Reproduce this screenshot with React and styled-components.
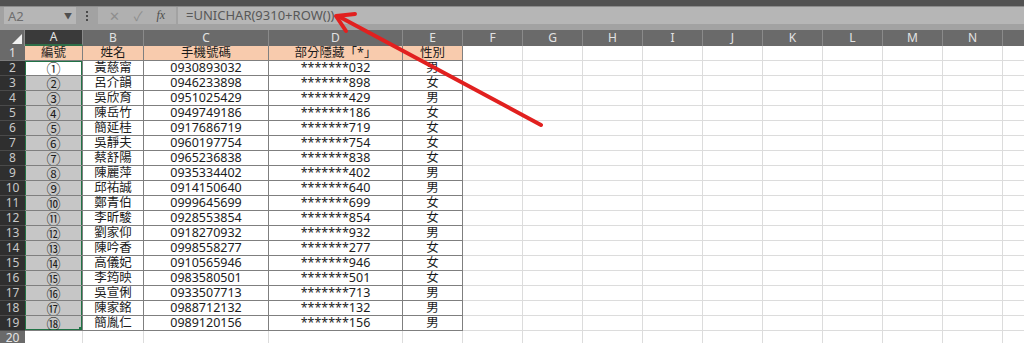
import React from "react"
import styled, { createGlobalStyle } from "styled-components"

const GlobalStyle = createGlobalStyle`
  * { box-sizing: border-box; }
  body {
    margin: 0;
    background: #ffffff;
    overflow: hidden;
    font-family: "Noto Sans", "Noto Sans CJK TC", sans-serif;
  }
`

const rows = [
  ["黃慈甯", "0930893032", "男"],
  ["呂介韻", "0946233898", "女"],
  ["吳欣育", "0951025429", "男"],
  ["陳岳竹", "0949749186", "女"],
  ["簡延桂", "0917686719", "女"],
  ["吳靜夫", "0960197754", "女"],
  ["蔡舒陽", "0965236838", "女"],
  ["陳麗萍", "0935334402", "男"],
  ["邱祐誠", "0914150640", "男"],
  ["鄭青伯", "0999645699", "女"],
  ["李昕駿", "0928553854", "女"],
  ["劉家仰", "0918270932", "男"],
  ["陳吟香", "0998558277", "女"],
  ["高儀妃", "0910565946", "女"],
  ["李筠映", "0983580501", "女"],
  ["吳宣俐", "0933507713", "男"],
  ["陳家銘", "0988712132", "男"],
  ["簡胤仁", "0989120156", "男"],
]

const titles = ["編號", "姓名", "手機號碼", "部分隱藏「*」", "性別"]
const letters = ["A", "B", "C", "D", "E", "F", "G", "H", "I", "J", "K", "L", "M", "N", "O"]

const Page = styled.div`
  position: relative;
  width: 1024px;
  height: 343px;
  overflow: hidden;
`

const TopStrip = styled.div`
  height: 7px;
  background: #525252;
  border-bottom: 1px solid #8c8c8c;
`

const Toolbar = styled.div`
  display: flex;
  align-items: flex-start;
  height: 23px;
  padding-left: 4px;
  background: #a2a2a2;
`

const NameBox = styled.div`
  display: flex;
  align-items: center;
  justify-content: space-between;
  width: 72px;
  height: 17px;
  padding: 0 4px 0 4px;
  background: #b6b6b6;
  color: #6e6e6e;
  font-size: 13px;

  span:last-child {
    font-size: 8px;
    color: #505050;
  }
`

const Grip = styled.div`
  display: flex;
  flex-direction: column;
  align-items: center;
  justify-content: center;
  gap: 2px;
  width: 22px;
  height: 17px;

  i {
    width: 2px;
    height: 2px;
    background: #4a4a4a;
  }
`

const ButtonGroup = styled.div`
  display: flex;
  align-items: center;
  justify-content: space-around;
  width: 78px;
  height: 17px;
  margin-right: 2px;
  padding: 0 4px;
  background: #b0b0b0;
  color: #8e8e8e;
  font-size: 13px;
`

const Fx = styled.span`
  color: #4d4d4d;
  font-family: "Liberation Serif", serif;
  font-style: italic;
  font-size: 12px;
`

const FormulaBox = styled.div`
  flex: 1;
  height: 17px;
  padding-left: 8px;
  background: #b6b6b6;
  color: #585858;
  font-size: 13px;
  line-height: 17px;
`

const Sheet = styled.div`
  display: grid;
  grid-template-columns: 25px 58px 61px 125px 134px 60px repeat(10, 60px);
  grid-template-rows: 16px repeat(20, 15px);
  font-size: 12.5px;
  line-height: 1;
`

const Corner = styled.div`
  display: flex;
  align-items: flex-end;
  justify-content: flex-end;
  padding: 0 2px 2px 0;
  background: #6a6a6a;
  border-right: 1px solid #8a8a8a;
`

const ColHead = styled.div`
  display: flex;
  align-items: center;
  justify-content: center;
  background: ${p => (p.$active ? "#3a3a3a" : "#6a6a6a")};
  border-right: 1px solid #8a8a8a;
  border-bottom: ${p => (p.$active ? "2px solid #2f6e48" : "none")};
  color: #e2e2e2;
  font-size: 12px;
`

const RowHead = styled.div`
  display: flex;
  align-items: center;
  justify-content: center;
  background: ${p => (p.$active ? "#2f2f2f" : "#6a6a6a")};
  border-bottom: 1px solid ${p => (p.$active ? "#4a4a4a" : "#7c7c7c")};
  color: ${p => (p.$active ? "#c8c8c8" : "#e4e4e4")};
  font-size: 12px;
`

const Cell = styled.div`
  position: relative;
  display: flex;
  align-items: center;
  justify-content: center;
  overflow: hidden;
  white-space: nowrap;
  color: #1c1c1c;
  font-size: ${p => (p.$circled ? "14px" : "inherit")};
  font-family: ${p => (p.$circled ? '"Noto Sans CJK TC", sans-serif' : "inherit")};
  background: ${p => (p.$title ? "#f8cbad" : p.$shade ? "#c6c6c6" : "#ffffff")};
  border-right: 1px solid ${p => (p.$data ? "#7f7f7f" : "#dcdcdc")};
  border-bottom: 1px solid ${p => (p.$data ? "#7f7f7f" : "#dcdcdc")};
  box-shadow: ${p => p.$sel || "none"};
`

const FillHandle = styled.span`
  position: absolute;
  right: -1px;
  bottom: -1px;
  width: 4px;
  height: 4px;
  background: #217346;
`

const Arrow = styled.svg`
  position: absolute;
  left: 0;
  top: 0;
  pointer-events: none;
`

const green = "#217346"

function selShadow(r) {
  const parts = [`inset 1px 0 0 ${green}`, `inset -1px 0 0 ${green}`]
  if (r === 0) parts.push(`inset 0 1px 0 ${green}`)
  if (r === rows.length - 1) parts.push(`inset 0 -1px 0 ${green}`)
  return parts.join(", ")
}

const App = () => {
  const cells = []

  cells.push(
    <Corner key="corner">
      <svg width="10" height="10" viewBox="0 0 10 10">
        <polygon points="10,0 10,10 0,10" fill="#f2f2f2" />
      </svg>
    </Corner>
  )
  letters.forEach((l, i) => {
    cells.push(
      <ColHead key={"h" + l} $active={i === 0}>
        {l}
      </ColHead>
    )
  })

  // row 1: titles
  cells.push(<RowHead key="r1">1</RowHead>)
  letters.forEach((l, i) => {
    cells.push(
      i < 5 ? (
        <Cell key={"1" + l} $data $title>
          {titles[i]}
        </Cell>
      ) : (
        <Cell key={"1" + l} />
      )
    )
  })

  rows.forEach((row, r) => {
    const n = r + 2
    const [name, phone, sex] = row
    const values = [
      String.fromCharCode(9310 + n),
      name,
      phone,
      "*******" + phone.slice(-3),
      sex,
    ]
    cells.push(
      <RowHead key={"r" + n} $active>
        {n}
      </RowHead>
    )
    letters.forEach((l, i) => {
      if (i >= 5) {
        cells.push(<Cell key={n + l} />)
        return
      }
      cells.push(
        <Cell
          key={n + l}
          $data
          $circled={i === 0}
          $shade={i === 0 && r > 0}
          $sel={i === 0 ? selShadow(r) : null}
        >
          {values[i]}
          {i === 0 && r === rows.length - 1 && <FillHandle />}
        </Cell>
      )
    })
  })

  cells.push(<RowHead key="r20">20</RowHead>)
  letters.forEach(l => cells.push(<Cell key={"20" + l} />))

  return (
    <Page>
      <GlobalStyle />
      <TopStrip />
      <Toolbar>
        <NameBox>
          <span>A2</span>
          <span>▼</span>
        </NameBox>
        <Grip>
          <i />
          <i />
          <i />
        </Grip>
        <ButtonGroup>
          <span>✕</span>
          <span>✓</span>
          <Fx>fx</Fx>
        </ButtonGroup>
        <FormulaBox>=UNICHAR(9310+ROW())</FormulaBox>
      </Toolbar>
      <Sheet>{cells}</Sheet>
      <Arrow width="1024" height="343" viewBox="0 0 1024 343">
        <g stroke="#e1201f" strokeWidth="4" strokeLinecap="round" fill="none">
          <line x1="541" y1="125" x2="338" y2="16" />
          <polyline points="355,14 336,16 346,31" strokeLinejoin="round" />
        </g>
      </Arrow>
    </Page>
  )
}

export default App
